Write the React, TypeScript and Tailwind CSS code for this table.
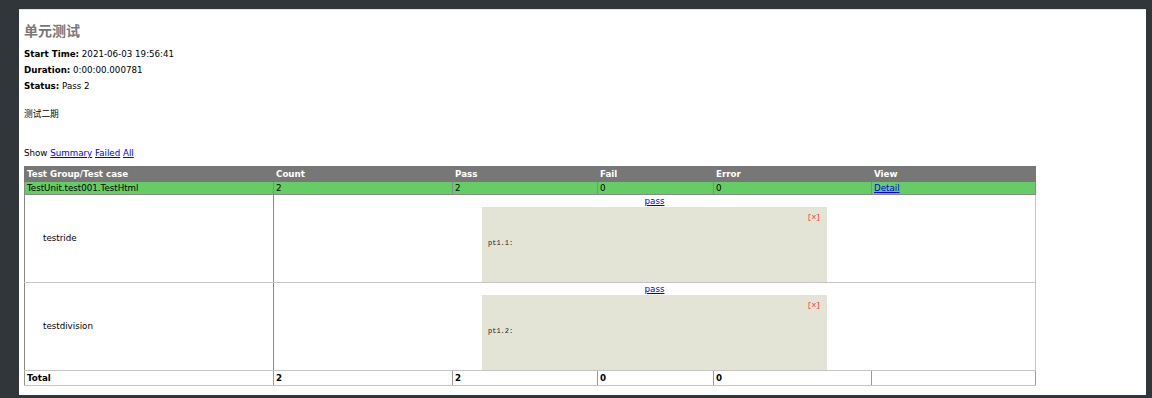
import React from "react";

const cols = [249, 179, 145, 116, 158, 164];

const Popup = ({ label }: { label: string }) => (
  <div className="flex flex-col items-center">
    <a href="#" className="text-[#0000ee] underline leading-[12px] h-[12px]">
      pass
    </a>
    <div className="w-[345px] h-[75px] bg-[#e4e4d6] relative">
      <span className="absolute right-[7px] top-[4px] text-[#e33] font-['Liberation_Mono',monospace] text-[8px] tracking-[-0.5px]">
        [x]
      </span>
      <pre className="pt-[31px] pl-[6px] text-left font-['Liberation_Mono',monospace] text-[7px] text-[#222]">
        {label}
      </pre>
    </div>
  </div>
);

const App = () => {
  const vb = "border-l border-r border-l-[#888] border-r-[#888]";
  return (
    <div className="w-[1152px] h-[398px] bg-[#31363a] pt-[9px] pl-[19px] overflow-hidden font-['DejaVu_Sans','Noto_Sans_CJK_SC',sans-serif] text-[8.7px] text-black">
      <div className="w-[1127px] h-[386px] bg-white border-t border-[#e4e4e4] pl-[5px] pt-[10px]">
        <h1 className="text-[14px] leading-[20px] font-bold text-[#777] font-['Noto_Sans_CJK_SC',sans-serif]">
          单元测试
        </h1>
        <div className="mt-[6px] leading-[16px]">
          <p>
            <b>Start Time:</b> 2021-06-03 19:56:41
          </p>
          <p>
            <b>Duration:</b> 0:00:00.000781
          </p>
          <p>
            <b>Status:</b> Pass 2
          </p>
        </div>
        <p className="mt-[12px] leading-[16px] font-['Noto_Sans_CJK_SC',sans-serif]">测试二期</p>
        <p className="mt-[23px] leading-[16px]">
          Show{" "}
          <a href="#" className="text-[#0000ee] underline">
            Summary
          </a>{" "}
          <a href="#" className="text-[#0000ee] underline">
            Failed
          </a>{" "}
          <a href="#" className="text-[#0000ee] underline">
            All
          </a>
        </p>
        <table className="mt-[5px] table-fixed border-collapse w-[1012px] border border-[#c4c4c4]">
          <colgroup>
            {cols.map((w, i) => (
              <col key={i} style={{ width: w }} />
            ))}
          </colgroup>
          <thead>
            <tr className="bg-[#777] text-white font-bold h-[15px] text-left">
              {["Test Group/Test case", "Count", "Pass", "Fail", "Error", "View"].map((h) => (
                <th key={h} className="px-[2px] py-0 border border-[#777] leading-[13px]">
                  {h}
                </th>
              ))}
            </tr>
          </thead>
          <tbody>
            <tr className="bg-[#66cc66] h-[13px]">
              {["TestUnit.test001.TestHtml", "2", "2", "0", "0"].map((c, i) => (
                <td key={i} className="px-[2px] py-0 border border-[#8a8a8a] leading-[12px]">
                  {c}
                </td>
              ))}
              <td className="px-[2px] py-0 border border-[#8a8a8a] leading-[12px]">
                <a href="#" className="text-[#0000ee] underline">
                  Detail
                </a>
              </td>
            </tr>
            {[
              ["testride", "pt1.1:"],
              ["testdivision", "pt1.2:"],
            ].map(([name, label]) => (
              <tr key={name} className="h-[87px]">
                <td className={`pl-[18px] align-middle border-t border-b border-[#c4c4c4] ${vb}`}>
                  {name}
                </td>
                <td colSpan={5} className="p-0 align-top border-t border-b border-[#c4c4c4]">
                  <Popup label={label} />
                </td>
              </tr>
            ))}
            <tr className="h-[15px] font-bold">
              {["Total", "2", "2", "0", "0", ""].map((c, i) => (
                <td key={i} className="px-[2px] py-0 border border-[#999] border-t-[#c4c4c4] border-b-[#c4c4c4] leading-[13px]">
                  {c}
                </td>
              ))}
            </tr>
          </tbody>
        </table>
      </div>
    </div>
  );
};

export default App;
